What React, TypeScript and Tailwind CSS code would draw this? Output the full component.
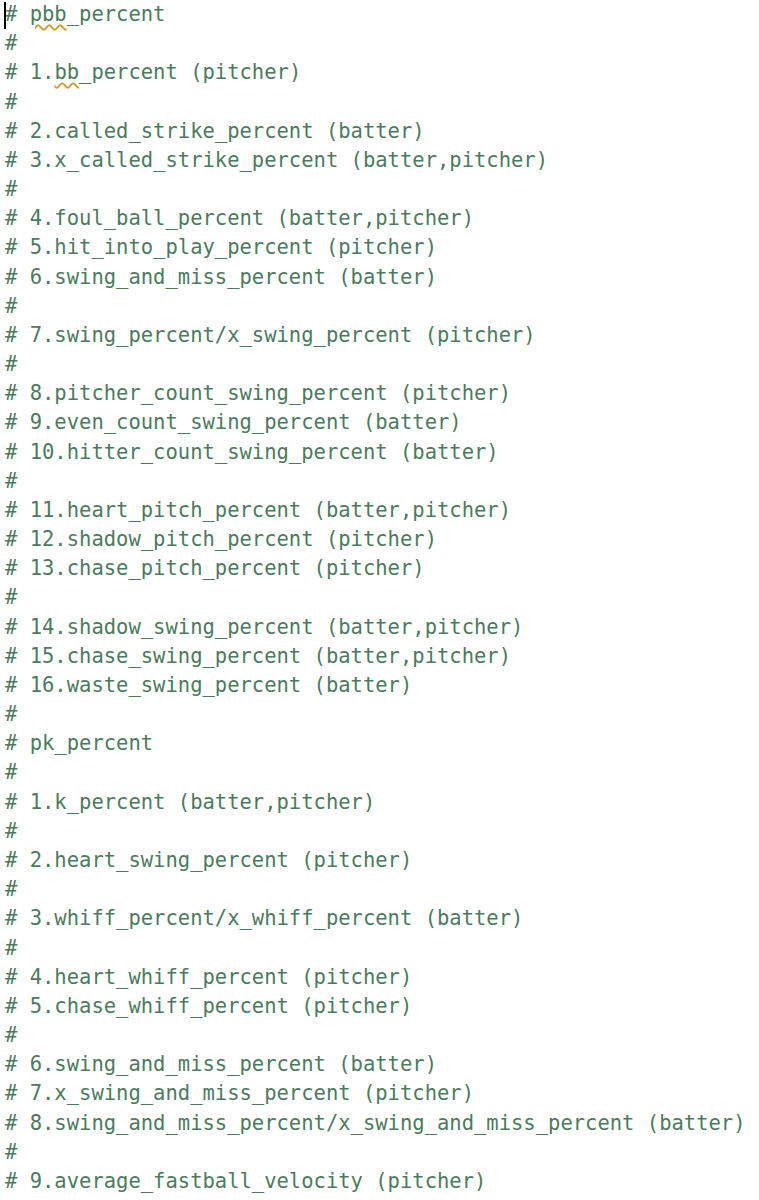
const lines: string[] = [
  '# pbb_percent',
  '#',
  '# 1.bb_percent (pitcher)',
  '#',
  '# 2.called_strike_percent (batter)',
  '# 3.x_called_strike_percent (batter,pitcher)',
  '#',
  '# 4.foul_ball_percent (batter,pitcher)',
  '# 5.hit_into_play_percent (pitcher)',
  '# 6.swing_and_miss_percent (batter)',
  '#',
  '# 7.swing_percent/x_swing_percent (pitcher)',
  '#',
  '# 8.pitcher_count_swing_percent (pitcher)',
  '# 9.even_count_swing_percent (batter)',
  '# 10.hitter_count_swing_percent (batter)',
  '#',
  '# 11.heart_pitch_percent (batter,pitcher)',
  '# 12.shadow_pitch_percent (pitcher)',
  '# 13.chase_pitch_percent (pitcher)',
  '#',
  '# 14.shadow_swing_percent (batter,pitcher)',
  '# 15.chase_swing_percent (batter,pitcher)',
  '# 16.waste_swing_percent (batter)',
  '#',
  '# pk_percent',
  '#',
  '# 1.k_percent (batter,pitcher)',
  '#',
  '# 2.heart_swing_percent (pitcher)',
  '#',
  '# 3.whiff_percent/x_whiff_percent (batter)',
  '#',
  '# 4.heart_whiff_percent (pitcher)',
  '# 5.chase_whiff_percent (pitcher)',
  '#',
  '# 6.swing_and_miss_percent (batter)',
  '# 7.x_swing_and_miss_percent (pitcher)',
  '# 8.swing_and_miss_percent/x_swing_and_miss_percent (batter)',
  '#',
  '# 9.average_fastball_velocity (pitcher)',
];

// spell-check squiggle, like the editor draws under unknown words
function Squiggle({ children }: { children: string }) {
  return (
    <span className="underline decoration-wavy decoration-[#d49a2e] decoration-[1.5px] underline-offset-[3px]">
      {children}
    </span>
  );
}

function Line({ text, idx }: { text: string; idx: number }) {
  if (idx === 0) {
    return (
      <div className="h-[29.175px] whitespace-pre">
        # <Squiggle>pbb</Squiggle>_percent
      </div>
    );
  }
  if (idx === 2) {
    return (
      <div className="h-[29.175px] whitespace-pre">
        # 1.<Squiggle>bb</Squiggle>_percent (pitcher)
      </div>
    );
  }
  return <div className="h-[29.175px] whitespace-pre">{text}</div>;
}

export default function App() {
  return (
    <div className="relative w-[759px] h-[1200px] bg-white overflow-hidden">
      {/* text caret */}
      <div className="absolute left-[4px] top-[2px] w-[2px] h-[27px] bg-black" />
      <div className="pl-[5px] font-['DejaVu_Sans_Mono',monospace] text-[20.5px] leading-[29.175px] text-[#4b7b5e]">
        {lines.map((l, i) => (
          <Line key={i} text={l} idx={i} />
        ))}
      </div>
    </div>
  );
}
